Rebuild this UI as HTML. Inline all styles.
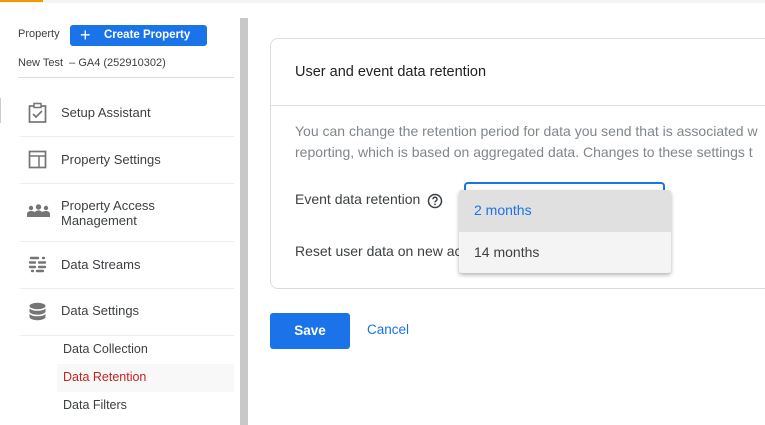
<!DOCTYPE html>
<html><head><meta charset="utf-8"><style>
*{margin:0;padding:0;box-sizing:border-box}
body{width:765px;height:425px;overflow:hidden;background:#fff;font-family:"Liberation Sans",Arial,sans-serif;position:relative;color:#3c4043}
.abs{position:absolute}
.nav{font-size:13px;color:#3c4043}
.sep{position:absolute;left:20px;width:214px;height:1px;background:#eee}
.sub{font-size:12.5px;color:#3c4043;position:absolute;left:63px}
</style></head><body>
<div class="abs" style="left:0;top:0;width:765px;height:3px;background:#f4f4f4"></div>
<div class="abs" style="left:0;top:0;width:43px;height:2px;background:#f29900"></div>
<div class="abs" style="left:240px;top:18px;width:8px;height:407px;background:#c8c8c8"></div>

<div class="abs" style="left:18px;top:28px;font-size:11px;color:#3c4043">Property</div>
<div class="abs" style="left:70px;top:25px;width:137px;height:21px;background:#1a73e8;border-radius:3px;color:#fff;font-size:11.5px;font-weight:bold;line-height:21px">
<span style="position:absolute;left:10px;top:0;font-size:18px;font-weight:normal;line-height:20px">+</span><span style="position:absolute;left:34px">Create Property</span></div>
<div class="abs" style="left:18px;top:57px;font-size:11px;color:#3c4043">New Test &nbsp;– GA4 (252910302)</div>
<div class="abs" style="left:18px;top:77px;width:216px;height:1px;background:#dadce0"></div>
<div class="abs" style="left:0;top:98px;width:1px;height:25px;background:#ccc"></div>

<svg class="abs" style="left:28px;top:102px" width="20" height="22" viewBox="0 0 20 22"><rect x="1.5" y="4" width="16" height="16" fill="none" stroke="#757575" stroke-width="1.7"/><rect x="6" y="1.5" width="7" height="4" fill="#fff" stroke="#757575" stroke-width="1.5"/><path d="M5 12l3 3 6-6" fill="none" stroke="#757575" stroke-width="1.7"/></svg>
<div class="abs nav" style="left:61px;top:105px">Setup Assistant</div>
<div class="sep" style="top:136px"></div>
<svg class="abs" style="left:28px;top:150px" width="20" height="20" viewBox="0 0 20 20"><rect x="1.5" y="1.5" width="16" height="16" fill="none" stroke="#757575" stroke-width="1.7"/><path d="M1.5 6h16M11 6v12" stroke="#757575" stroke-width="1.5"/></svg>
<div class="abs nav" style="left:61px;top:152px">Property Settings</div>
<div class="sep" style="top:183px"></div>
<svg class="abs" style="left:27px;top:204px" width="23" height="14" viewBox="0 0 23 14"><circle cx="4" cy="4" r="2.2" fill="#757575"/><circle cx="11.5" cy="3" r="2.7" fill="#757575"/><circle cx="19" cy="4" r="2.2" fill="#757575"/><path d="M0 13v-3c0-2 2-3 4-3s3 .5 4 1c1-1 2-1.6 3.5-1.6S14 7 15 8c1-.5 2-1 4-1s4 1 4 3v3z" fill="#757575"/></svg>
<div class="abs nav" style="left:61px;top:198px;line-height:15px">Property Access<br>Management</div>
<div class="sep" style="top:241px"></div>
<svg class="abs" style="left:28px;top:256px" width="19" height="17" viewBox="0 0 19 17"><g stroke="#757575" stroke-width="2.4" stroke-linecap="round"><path d="M3 2h7M15 2h1M2 6.5h5M11 6.5h6M2 11h5M11 11h6M4 15h1M9 15h6"/></g></svg>
<div class="abs nav" style="left:61px;top:257px">Data Streams</div>
<div class="sep" style="top:288px"></div>
<svg class="abs" style="left:28px;top:302px" width="19" height="19" viewBox="0 0 19 19"><ellipse cx="9.5" cy="4" rx="8" ry="3.2" fill="#757575"/><path d="M1.5 6.5v3c0 1.8 3.6 3.2 8 3.2s8-1.4 8-3.2v-3c-1.5 1.5-4.5 2.3-8 2.3s-6.5-.8-8-2.3z" fill="#757575"/><path d="M1.5 12v3c0 1.8 3.6 3.2 8 3.2s8-1.4 8-3.2v-3c-1.5 1.5-4.5 2.3-8 2.3s-6.5-.8-8-2.3z" fill="#757575"/></svg>
<div class="abs nav" style="left:61px;top:303px">Data Settings</div>
<div class="sep" style="top:335px"></div>
<div class="sub" style="top:342px">Data Collection</div>
<div class="abs" style="left:57px;top:364px;width:177px;height:28px;background:#f8f8f8"></div>
<div class="sub" style="top:370px;color:#c5221f">Data Retention</div>
<div class="sub" style="top:398px">Data Filters</div>

<div class="abs" style="left:270px;top:38px;width:520px;height:251px;border:1px solid #dadce0;border-radius:8px"></div>
<div class="abs" style="left:271px;top:105px;width:494px;height:1px;background:#dadce0"></div>
<div class="abs" style="left:295px;top:64px;font-size:14.5px;color:#202124">User and event data retention</div>
<div class="abs" style="left:295px;top:121px;font-size:14px;color:#80868b;line-height:21px;white-space:nowrap">You can change the retention period for data you send that is associated w<br>reporting, which is based on aggregated data. Changes to these settings t</div>
<div class="abs" style="left:295px;top:191px;font-size:14px;color:#3c4043">Event data retention</div>
<svg class="abs" style="left:427px;top:193px" width="16" height="16" viewBox="0 0 16 16"><circle cx="8" cy="8" r="6.5" fill="none" stroke="#3c4043" stroke-width="1.5"/><path d="M6 6.3a2 2 0 1 1 2.7 1.8c-.5.3-.7.6-.7 1.3" fill="none" stroke="#3c4043" stroke-width="1.4"/><circle cx="8" cy="11.4" r=".9" fill="#3c4043"/></svg>
<div class="abs" style="left:295px;top:243px;font-size:14px;color:#3c4043">Reset user data on new ac</div>
<div class="abs" style="left:464px;top:182px;width:201px;height:20px;border:2px solid #1a73e8;border-bottom:none;border-radius:4px 4px 0 0"></div>
<div class="abs" style="left:459px;top:190px;width:212px;height:83px;background:#f4f4f4;border-radius:3px;box-shadow:0 2px 4px rgba(0,0,0,.3)">
<div style="height:42px;background:#e0e0e0;border-radius:3px 3px 0 0;color:#1a73e8;font-size:14px;padding:12px 0 0 15px">2 months</div>
<div style="font-size:14px;color:#3c4043;padding:12px 0 0 15px">14 months</div></div>

<div class="abs" style="left:270px;top:313px;width:80px;height:36px;background:#1a73e8;border-radius:3px;color:#fff;font-size:13.5px;font-weight:bold;text-align:center;line-height:36px">Save</div>
<div class="abs" style="left:367px;top:322px;font-size:13.5px;color:#1a73e8">Cancel</div>
</body></html>
